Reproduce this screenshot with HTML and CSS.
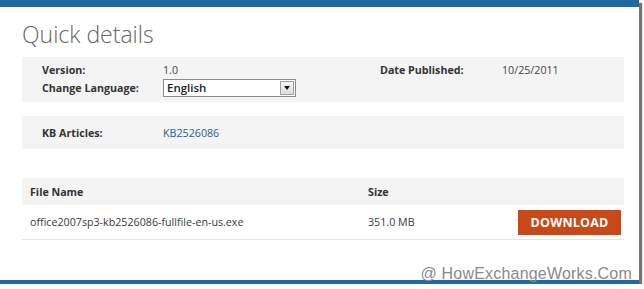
FILE: index.html
```html
<!DOCTYPE html>
<html lang="en">
<head>
  <meta charset="UTF-8">
  <title>Quick details</title>
  <link rel="stylesheet" href="styles.css">
</head>
<body>
  <div class="frame">
    <h1 class="title">Quick details</h1>

    <div class="info-box">
      <div class="info-grid">
        <span class="label">Version:</span>
        <span class="value">1.0</span>
        <span class="label">Date Published:</span>
        <span class="value">10/25/2011</span>
        <span class="label">Change Language:</span>
        <span class="value">
          <span class="select">
            <span class="select-text">English</span>
            <span class="select-arrow"><span class="tri"></span></span>
          </span>
        </span>
      </div>
    </div>

    <div class="info-box kb">
      <span class="label">KB Articles:</span>
      <a class="link" href="#">KB2526086</a>
    </div>

    <div class="files">
      <div class="files-head">
        <span class="col-name">File Name</span>
        <span class="col-size">Size</span>
      </div>
      <div class="files-row">
        <span class="col-name">office2007sp3-kb2526086-fullfile-en-us.exe</span>
        <span class="col-size">351.0 MB</span>
        <button class="download">DOWNLOAD</button>
      </div>
    </div>

    <div class="watermark">@ HowExchangeWorks.Com</div>
  </div>
</body>
</html>
```

FILE: styles.css
```css
* { box-sizing: border-box; }
html, body { margin: 0; padding: 0; }

body {
  background: #fff;
  font-family: "Open Sans", "Noto Sans", sans-serif;
  font-size: 10.7px;
  color: #3a3a3a;
}

/* Framed screenshot */
.frame {
  position: relative;
  width: 639px;
  height: 284px;
  background: #fff;
  border-top: 7px solid #21699f;
  border-bottom: 4px solid #21699f;
  box-shadow: 3px 3px 1px rgba(0,0,0,0.55);
  padding: 0 15px 0 22px;
}

.title {
  margin: 13px 0 0 0;
  font-size: 23px;
  line-height: 29px;
  font-weight: 300;
  color: #666;
}

/* Grey boxes */
.info-box {
  background: #f4f4f4;
  margin-top: 8px;
  padding: 4px 20px 5px 20px;
}
.info-grid {
  display: grid;
  grid-template-columns: 121px 217px 122px auto;
  grid-auto-rows: 18px;
  align-items: center;
}
.label { font-weight: 700; color: #333; }
.value { color: #444; }

.select {
  display: flex;
  width: 133px;
  height: 18px;
  border: 1px solid #8a8a8a;
  background: #fff;
}
.select-text {
  flex: 1;
  padding-left: 3px;
  font-weight: 600;
  font-size: 11.5px;
  line-height: 16px;
  color: #222;
}
.select-arrow {
  width: 14px;
  margin: 1px;
  border: 1px solid #a0a0a0;
  background: linear-gradient(#f6f6f6, #dcdcdc);
  display: flex;
  align-items: center;
  justify-content: center;
}
.tri {
  width: 0;
  height: 0;
  border-left: 3px solid transparent;
  border-right: 3px solid transparent;
  border-top: 4px solid #111;
}

.kb {
  margin-top: 14px;
  height: 33px;
  display: flex;
  align-items: center;
  padding: 0 20px;
}
.kb .label { width: 121px; }
.link { color: #1e5d8e; text-decoration: none; }

/* Files table */
.files { margin-top: 29px; }
.files-head {
  display: flex;
  align-items: center;
  height: 27px;
  background: #f4f4f4;
  padding-left: 8px;
  font-weight: 700;
  color: #333;
}
.files-row {
  display: flex;
  align-items: center;
  height: 35px;
  padding-left: 8px;
  border-bottom: 1px solid #e4e4e4;
}
.col-name { width: 338px; }
.col-size { width: 150px; }
.download {
  margin-left: auto;
  margin-right: 3px;
  width: 103px;
  height: 25px;
  border: none;
  background: #c94818;
  color: #fff;
  font-family: inherit;
  font-weight: 700;
  font-size: 12.5px;
  letter-spacing: 0.2px;
}

.watermark {
  position: absolute;
  right: 7px;
  bottom: -3px;
  font-family: "Liberation Sans", Arial, sans-serif;
  font-size: 16px;
  color: #8a8a8a;
  letter-spacing: 0.2px;
}
```
